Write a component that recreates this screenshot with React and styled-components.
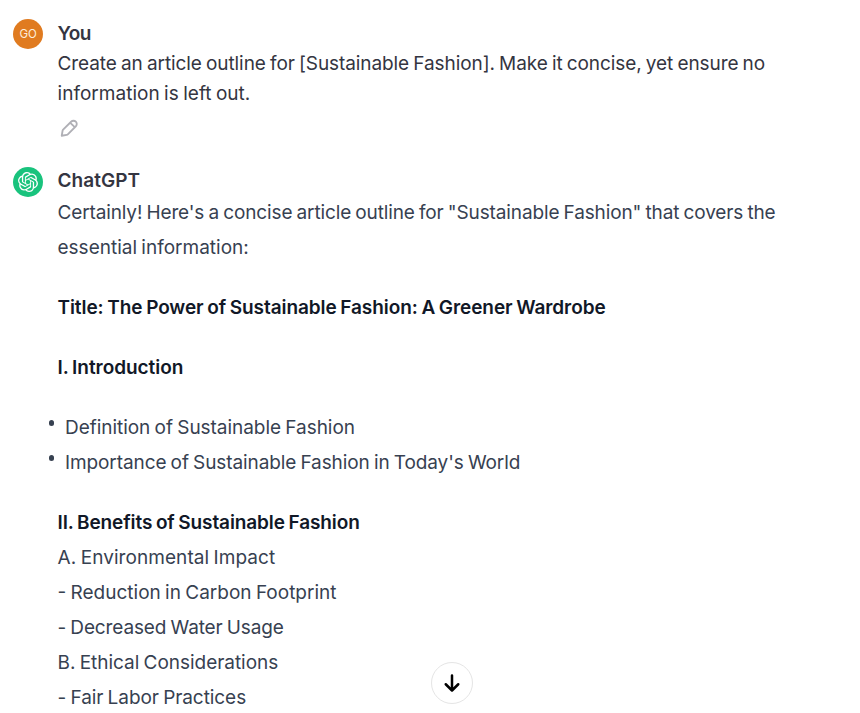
import React from 'react';
import styled, { createGlobalStyle } from 'styled-components';
import { SiOpenai } from 'react-icons/si';

const GlobalStyle = createGlobalStyle`
  * {
    box-sizing: border-box;
  }

  body {
    margin: 0;
    background-color: #ffffff;
    overflow: hidden;
  }
`;

const Page = styled.main`
  position: relative;
  height: 713px;
  padding: 19px 13px 0;
  overflow: hidden;
  font-family: 'Inter', 'Liberation Sans', sans-serif;
  font-size: 19px;
  word-spacing: -1px;
  color: #343541;
`;

const Message = styled.article`
  display: flex;
  align-items: flex-start;
  gap: 14.5px;
`;

const Avatar = styled.div`
  display: flex;
  flex: none;
  justify-content: center;
  align-items: center;
  width: 30px;
  height: 30px;
  margin-top: ${(props) => props.$offset || 0}px;
  border-radius: 50%;
  background-color: ${(props) => props.$color};
  color: #fdeedd;
  font-size: 11.5px;
  letter-spacing: -0.3px;
`;

const Content = styled.div`
  flex: 1;
  min-width: 0;
`;

const Author = styled.div`
  line-height: 30px;
  font-weight: 600;
  letter-spacing: ${(props) => props.$tracking || 0}px;
`;

const Line = styled.div`
  line-height: 30px;
  white-space: nowrap;
  letter-spacing: ${(props) => props.$tracking || 0}px;
`;

const Actions = styled.div`
  display: flex;
  height: 57px;
  padding-top: 8px;
  color: #b0b0b6;
`;

const Answer = styled.div`
  display: flex;
  flex-direction: column;
  gap: 25px;
  margin-top: -1px;
  color: #374151;

  ${Line} {
    line-height: 35px;
  }
`;

const Strong = styled(Line).attrs({ as: 'strong' })`
  display: block;
  font-weight: 600;
  color: #111827;
`;

const List = styled.ul`
  margin: 0;
  padding: 0;
  list-style: none;
`;

const Item = styled.li`
  display: flex;
  align-items: flex-start;
  gap: 11px;
  margin-left: -9px;

  &::before {
    content: '';
    width: 5.5px;
    height: 5.5px;
    margin-top: 10px;
    border-radius: 50%;
    background-color: #374151;
  }
`;

const ScrollButton = styled.button`
  position: absolute;
  left: 431px;
  top: 662px;
  display: flex;
  justify-content: center;
  align-items: center;
  width: 42px;
  height: 42px;
  padding: 0;
  border: 1px solid #e5e5e5;
  border-radius: 50%;
  background-color: #ffffff;
  color: #000000;
`;

function PencilIcon() {
  return (
    <svg width="22.5" height="22.5" viewBox="0 0 24 24" fill="none">
      <path
        fillRule="evenodd"
        clipRule="evenodd"
        fill="currentColor"
        d="M13.2929 4.29291C15.0641 2.52167 17.9359 2.52167 19.7071 4.2929C21.4784 6.06414 21.4784 8.93588 19.7072 10.7071L11.1603 19.2539C10.7182 19.696 10.1489 19.989 9.53219 20.0918L4.1644 20.9864C3.84584 21.0395 3.52125 20.9355 3.29289 20.7071C3.06453 20.4788 2.96051 20.1542 3.0136 19.8356L3.90824 14.4678C4.01103 13.8511 4.30396 13.2818 4.7461 12.8397L13.2929 4.29291ZM13 7.41422L6.16031 14.2539C6.01293 14.4013 5.91529 14.591 5.88102 14.7966L5.21655 18.7835L9.20339 18.119C9.40898 18.0847 9.59872 17.9871 9.7461 17.8397L16.5858 11L13 7.41422ZM18 9.5858L14.4142 6.00001L14.7071 5.70712C15.6973 4.71693 17.3027 4.71693 18.2929 5.70712C19.2831 6.69731 19.2831 8.30272 18.2929 9.29291L18 9.5858Z"
      />
    </svg>
  );
}

function ArrowDownIcon() {
  return (
    <svg width="30" height="30" viewBox="0 0 24 24" fill="none">
      <path
        d="M17 13L12 18L7 13M12 6L12 17"
        stroke="currentColor"
        strokeWidth="2"
        strokeLinecap="round"
        strokeLinejoin="round"
      />
    </svg>
  );
}

function App() {
  return (
    <>
      <GlobalStyle />
      <Page>
        <Message>
          <Avatar $color="#e07b20">GO</Avatar>
          <Content>
            <Author $tracking={-0.5}>You</Author>
            <Line $tracking={-0.09}>
              Create an article outline for [Sustainable Fashion]. Make it concise, yet ensure no
            </Line>
            <Line $tracking={0.03}>information is left out.</Line>
            <Actions>
              <PencilIcon />
            </Actions>
          </Content>
        </Message>

        <Message>
          <Avatar $color="#19c37d" $offset={1}>
            <SiOpenai size={20} color="#ffffff" />
          </Avatar>
          <Content>
            <Author $tracking={0.05}>ChatGPT</Author>
            <Answer>
              <div>
                <Line $tracking={-0.13}>
                  Certainly! Here's a concise article outline for "Sustainable Fashion" that covers the
                </Line>
                <Line>essential information:</Line>
              </div>
              <Strong $tracking={-0.08}>Title: The Power of Sustainable Fashion: A Greener Wardrobe</Strong>
              <Strong $tracking={-0.04}>I. Introduction</Strong>
              <List>
                <Item>
                  <Line $tracking={-0.04}>Definition of Sustainable Fashion</Line>
                </Item>
                <Item>
                  <Line $tracking={-0.1}>Importance of Sustainable Fashion in Today's World</Line>
                </Item>
              </List>
              <div>
                <Strong $tracking={-0.11}>II. Benefits of Sustainable Fashion</Strong>
                <Line $tracking={0.07}>A. Environmental Impact</Line>
                <Line>- Reduction in Carbon Footprint</Line>
                <Line $tracking={-0.13}>- Decreased Water Usage</Line>
                <Line $tracking={-0.03}>B. Ethical Considerations</Line>
                <Line $tracking={-0.07}>- Fair Labor Practices</Line>
              </div>
            </Answer>
          </Content>
        </Message>

        <ScrollButton aria-label="Scroll to bottom">
          <ArrowDownIcon />
        </ScrollButton>
      </Page>
    </>
  );
}

export default App;
